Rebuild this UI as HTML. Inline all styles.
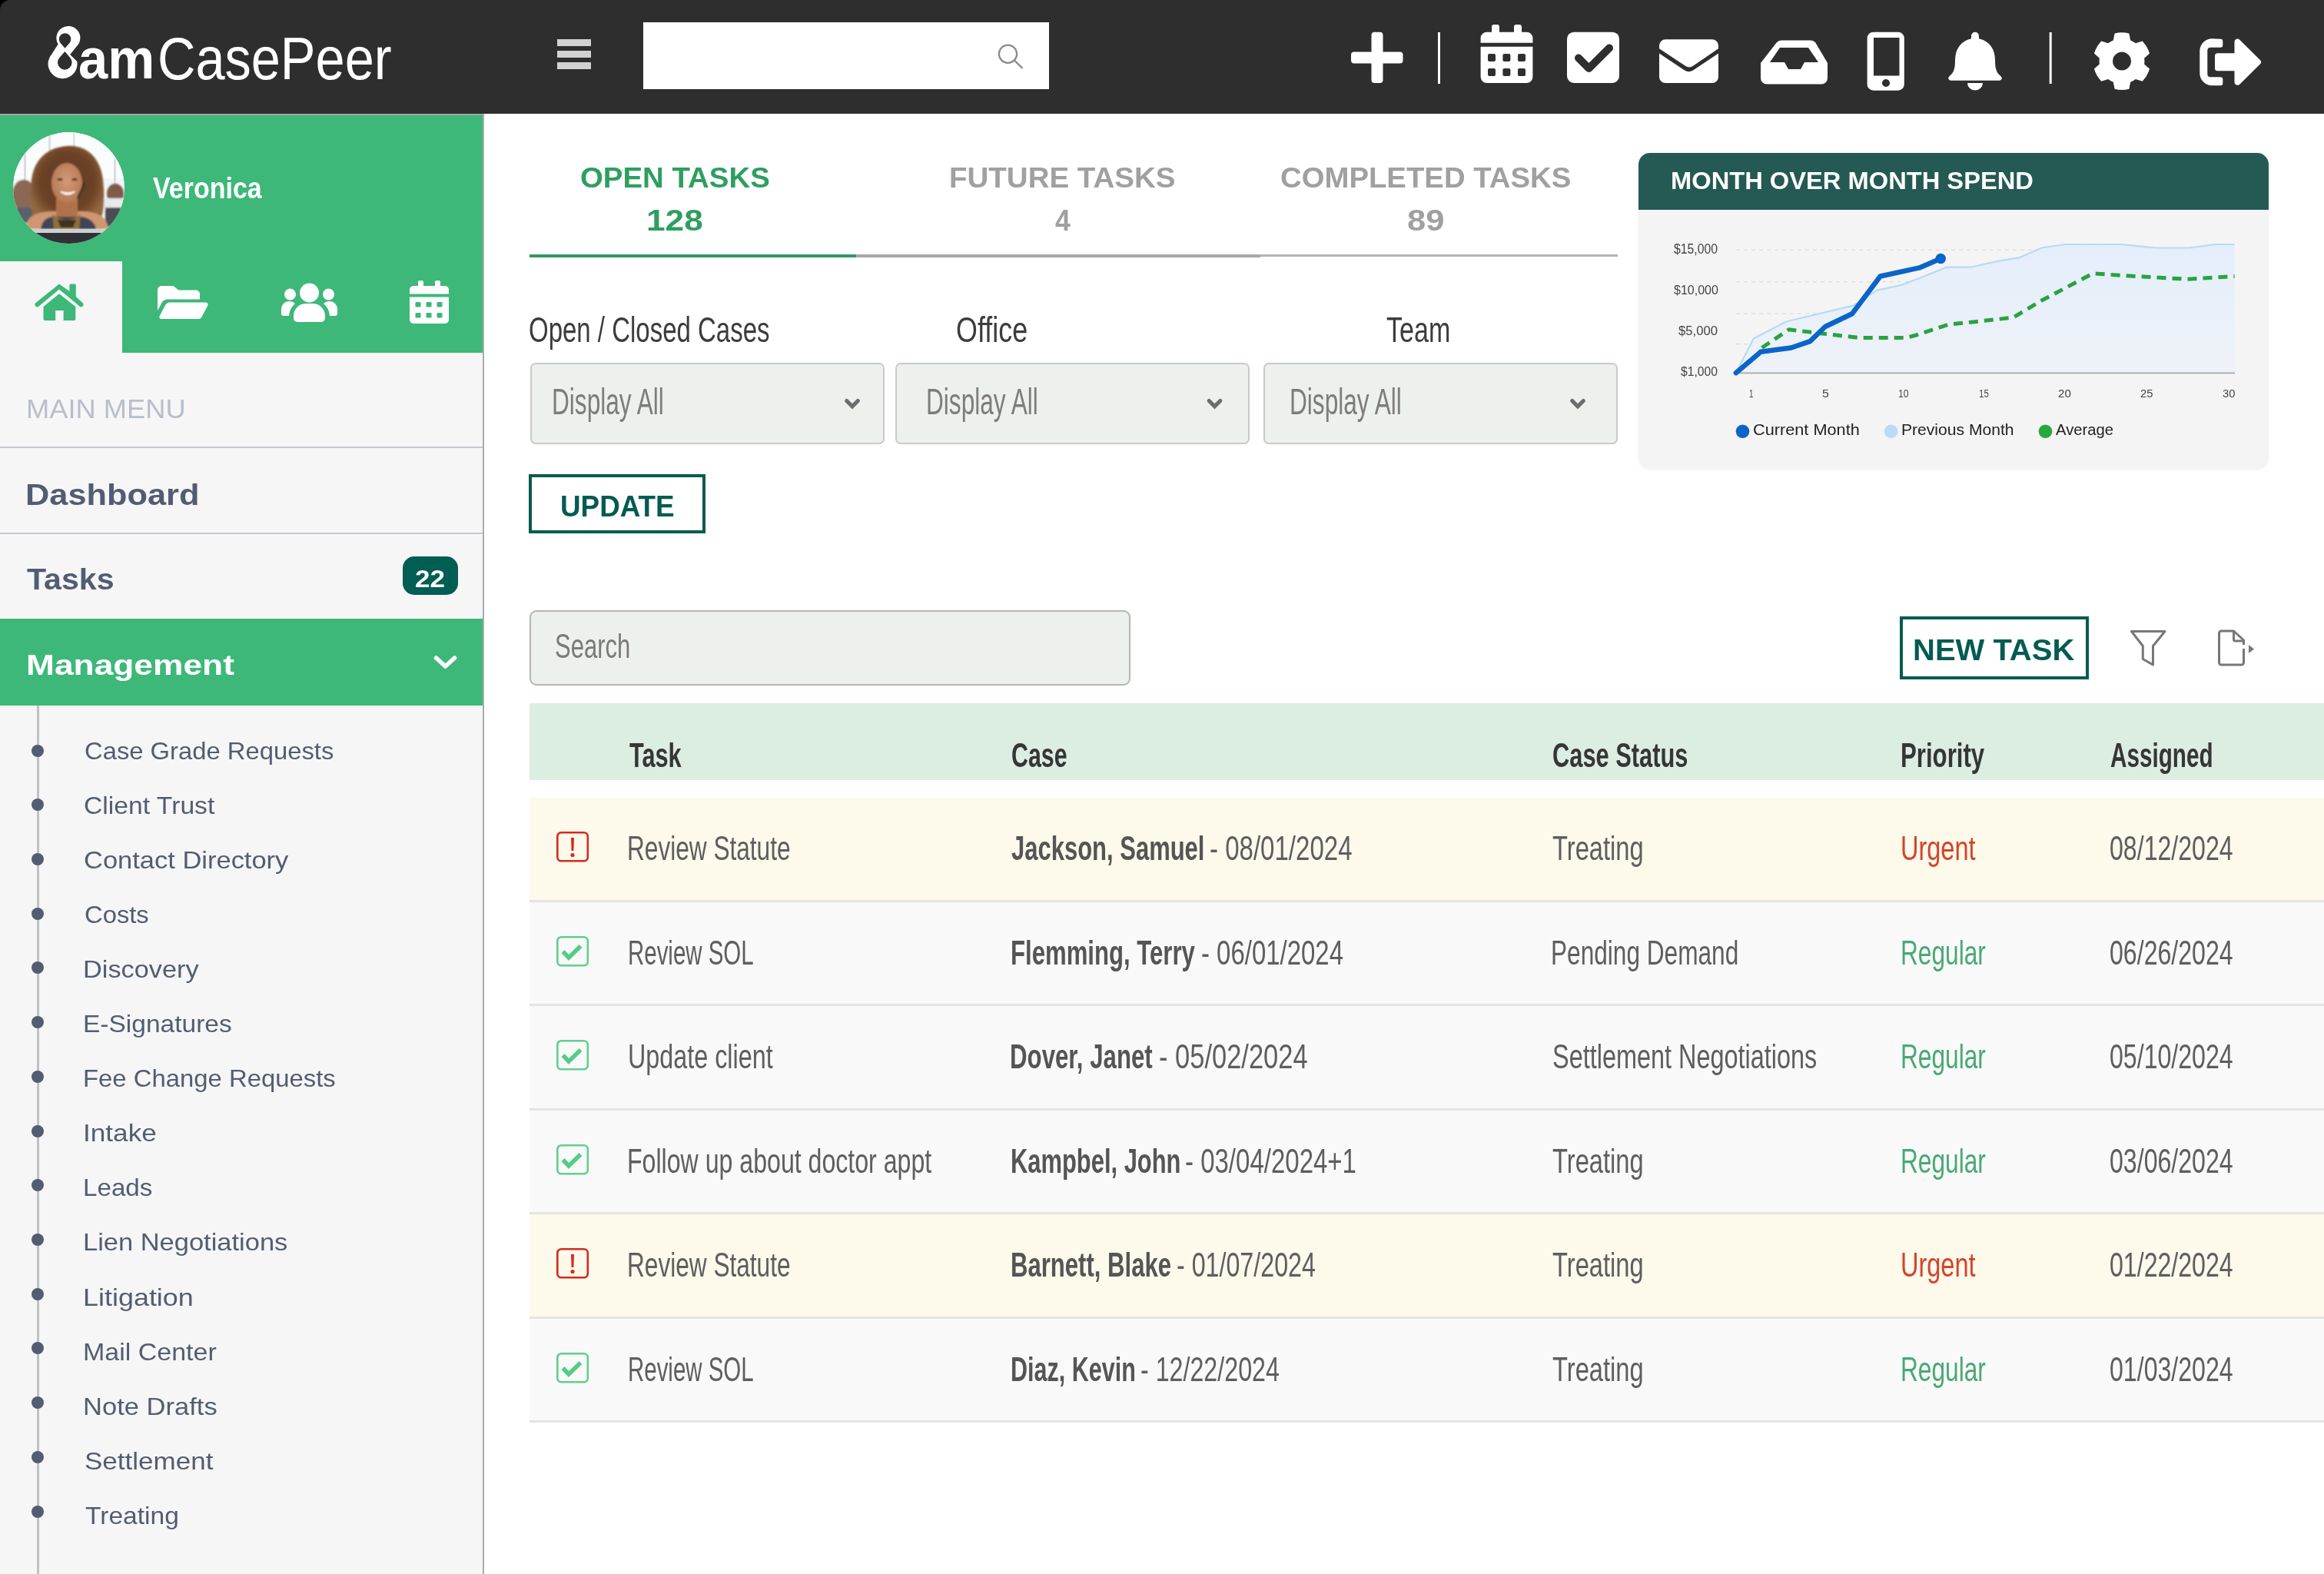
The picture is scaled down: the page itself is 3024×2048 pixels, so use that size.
<!DOCTYPE html><html><head><meta charset="utf-8"><style>
*{margin:0;padding:0;box-sizing:border-box}
html,body{width:3024px;height:2048px;overflow:hidden;background:#fff;font-family:"Liberation Sans",sans-serif}
.a{position:absolute}
.t{position:absolute;white-space:pre;line-height:1;transform-origin:0 0}
</style></head><body>
<div class="a" style="left:0.0px;top:0.0px;width:20.0px;height:20.0px;background:#000"></div>
<div class="a" style="left:0.0px;top:0.0px;width:3024.0px;height:148.0px;background:#2e2e2e;border-top-left-radius:13px"></div>
<div class="a" style="left:725.0px;top:51.0px;width:44.0px;height:9.0px;background:#d2d2d2"></div>
<div class="a" style="left:725.0px;top:66.0px;width:44.0px;height:9.0px;background:#d2d2d2"></div>
<div class="a" style="left:725.0px;top:81.0px;width:44.0px;height:9.0px;background:#d2d2d2"></div>
<div class="a" style="left:836.5px;top:29.0px;width:528.5px;height:86.5px;background:#fff"></div>
<svg class="a" style="left:1290px;top:48px" width="50" height="50" viewBox="1290 48 50 50"><circle cx="1311.5" cy="70.2" r="11.6" fill="none" stroke="#8a8a8a" stroke-width="2.2"/><line x1="1320" y1="78.5" x2="1330.5" y2="89" stroke="#8a8a8a" stroke-width="2.4"/></svg>
<svg class="a" style="left:55px;top:25px" width="60" height="90" viewBox="55 25 60 90"><path fill="#fff" fill-rule="evenodd" d="M75.6 57.4 A15.5 15.5 0 1 1 99.6 60.6 L91.2 70.9 L100.3 80 A19 19 0 1 1 67.3 70.6 Z M84.5 62.8 L78.7 55.9 A7.7 7.7 0 1 1 90.5 55.9 Z M84.4 67.1 L91.4 75.35 A9.3 9.3 0 1 1 77.2 75.35 Z"/></svg>

<svg class="a" style="left:0;top:0" width="3024" height="148" viewBox="0 0 3024 148">
 <g fill="#fff">
  <rect x="1758" y="67.4" width="67.5" height="15" rx="4"/>
  <rect x="1784.5" y="41.7" width="15" height="66.3" rx="4"/>
  <rect x="1871" y="42" width="3" height="67"/>
  <rect x="2666.7" y="42" width="3" height="67"/>
  <!-- calendar -->
  <path d="M1926.6 49.7 a8 8 0 0 1 8 -8 h51.8 a8 8 0 0 1 8 8 v6.1 h-67.8z"/>
  <path d="M1926.6 60.7 h67.8 v39.3 a8 8 0 0 1 -8 8 h-51.8 a8 8 0 0 1 -8 -8z"/>
  <rect x="1941" y="32" width="10" height="14" rx="3"/>
  <rect x="1970" y="32" width="10" height="14" rx="3"/>
  <!-- check square -->
  <rect x="2039" y="41.7" width="68" height="66.3" rx="9"/>
  <!-- envelope -->
  <path d="M2159 59.3 a8 8 0 0 1 8 -8 h61 a8 8 0 0 1 8 8 v4 l-33 22.5 a9 9 0 0 1 -10 0 l-34 -22.5z"/>
  <path d="M2159 69.5 l33 22 a10 10 0 0 0 11 0 l33 -22 v30.5 a8 8 0 0 1 -8 8 h-61 a8 8 0 0 1 -8 -8z"/>
  <!-- inbox -->
  <path d="M2291 82 l21 -27 a8 8 0 0 1 6 -2.5 h38 a8 8 0 0 1 6 2.5 l16 27 v19.5 a8 8 0 0 1 -8 8 h-71 a8 8 0 0 1 -8 -8z M2316 62 l-13 19 h19 l5 9 h16 l5 -9 h18 l-13 -19z" fill-rule="evenodd"/>
  <!-- mobile -->
  <path d="M2437.6 41.7 h32.2 a8 8 0 0 1 8 8 v60 a8 8 0 0 1 -8 8 h-32.2 a8 8 0 0 1 -8 -8 v-60 a8 8 0 0 1 8 -8z M2438 49 v49.6 h33.5 v-49.6z M2454 103 a5 5 0 1 0 0.01 0z" fill-rule="evenodd"/>
  <!-- bell -->
  <path d="M2570 41.7 a5 5 0 0 1 5 5 v3.5 c14 3 21 14 21 28 c0 14 3 17 8 21.5 a3 3 0 0 1 -2 5 h-64 a3 3 0 0 1 -2 -5 c5 -4.5 8 -7.5 8 -21.5 c0 -14 7 -25 21 -28 v-3.5 a5 5 0 0 1 5 -5z"/>
  <path d="M2560 108 h20 a10 9.5 0 0 1 -20 0z"/>
  <!-- gear -->
  <path d="M2749.75 52.44 L2751.64 43.39 A37.4 37.4 0 0 1 2770.36 43.39 L2772.25 52.44 A29.4 29.4 0 0 1 2778.90 56.28 L2787.68 53.39 A37.4 37.4 0 0 1 2797.04 69.61 L2790.15 75.76 A29.4 29.4 0 0 1 2790.15 83.44 L2797.04 89.59 A37.4 37.4 0 0 1 2787.68 105.81 L2778.90 102.92 A29.4 29.4 0 0 1 2772.25 106.76 L2770.36 115.81 A37.4 37.4 0 0 1 2751.64 115.81 L2749.75 106.76 A29.4 29.4 0 0 1 2743.10 102.92 L2734.32 105.81 A37.4 37.4 0 0 1 2724.96 89.59 L2731.85 83.44 A29.4 29.4 0 0 1 2731.85 75.76 L2724.96 69.61 A37.4 37.4 0 0 1 2734.32 53.39 L2743.10 56.28 A29.4 29.4 0 0 1 2749.75 52.44 Z M2761.0 67.6 a12 12 0 1 0 0.01 0z" fill-rule="evenodd"/>
  <!-- sign out -->
  <path d="M2889 50.7 a3 3 0 0 1 3.3 3 v5 a3 3 0 0 1 -3 3 h-13 a4 4 0 0 0 -4 4 v30.5 a4 4 0 0 0 4 4 h13 a3 3 0 0 1 3 3 v5 a3 3 0 0 1 -3 3 h-11 a16 16 0 0 1 -16 -16 v-29 a16 16 0 0 1 16 -16z"/>
  <path d="M2907.5 54 a4 4 0 0 1 6.5 -2.5 l27 26.7 a3.5 3.5 0 0 1 0 5 l-27 26.7 a4 4 0 0 1 -6.5 -2.5 v-15.2 h-22 a3.5 3.5 0 0 1 -3.5 -3.5 v-16 a3.5 3.5 0 0 1 3.5 -3.5 h22z"/>
 </g>
 <g fill="#2e2e2e">
  <rect x="1936" y="70" width="10" height="10" rx="2"/><rect x="1955.4" y="70" width="10" height="10" rx="2"/><rect x="1975" y="70" width="10" height="10" rx="2"/>
  <rect x="1936" y="89" width="10" height="10" rx="2"/><rect x="1955.4" y="89" width="10" height="10" rx="2"/><rect x="1975" y="89" width="10" height="10" rx="2"/>
 </g>
 <path d="M2054 75.5 l13.5 13.5 l26.5 -26.5" fill="none" stroke="#2e2e2e" stroke-width="10" stroke-linecap="round" stroke-linejoin="round"/>
</svg>

<div class="a" style="left:0.0px;top:148.0px;width:630.0px;height:1900.0px;background:#f6f6f6"></div>
<div class="a" style="left:628.0px;top:148.0px;width:2.0px;height:1900.0px;background:#a9abb1"></div>
<div class="a" style="left:0.0px;top:148.0px;width:628.0px;height:2.0px;background:#a3a8a6"></div>
<div class="a" style="left:0.0px;top:150.0px;width:628.0px;height:309.0px;background:#3db879"></div>
<div class="a" style="left:0.0px;top:340.0px;width:159.0px;height:119.0px;background:#f6f6f6"></div>
<svg class="a" style="left:17px;top:172px" width="145" height="145" viewBox="0 0 145 145">
<defs><clipPath id="av"><circle cx="72.5" cy="72.5" r="72.5"/></clipPath>
<radialGradient id="hair" cx="0.5" cy="0.45" r="0.55"><stop offset="0" stop-color="#5a3520"/><stop offset="0.7" stop-color="#6e4428"/><stop offset="1" stop-color="#93673f"/></radialGradient>
<radialGradient id="face" cx="0.5" cy="0.45" r="0.6"><stop offset="0" stop-color="#d39a75"/><stop offset="1" stop-color="#b47652"/></radialGradient>
<filter id="bl"><feGaussianBlur stdDeviation="0.8"/></filter></defs>
<g clip-path="url(#av)">
<rect width="145" height="145" fill="#f3f5f7"/>
<rect x="0" y="0" width="145" height="60" fill="#fbfcfd"/>
<rect x="14" y="10" width="3" height="70" fill="#d9dde2"/><rect x="46" y="0" width="3" height="60" fill="#dde1e5"/><rect x="78" y="0" width="2.5" height="30" fill="#dde1e5"/><rect x="131" y="35" width="3" height="45" fill="#d9dde2"/>
<g filter="url(#bl)">
<ellipse cx="14" cy="82" rx="15" ry="20" fill="#8a6752"/>
<rect x="4" y="98" width="24" height="20" fill="#5c6068"/>
<ellipse cx="133" cy="80" rx="11" ry="13" fill="#7d5c4a"/>
<rect x="113" y="86" width="32" height="14" fill="#e8e9eb"/>
<rect x="120" y="98" width="22" height="25" fill="#4b4e55"/>
<path d="M70 18 C98 16 114 36 117 62 C120 88 118 112 110 120 L30 120 C22 108 22 82 24 62 C27 36 44 20 70 18Z" fill="url(#hair)"/>
<path d="M16 126 C18 108 30 104 50 103 L90 103 C112 104 122 110 124 126Z" fill="#cf9770"/>
<rect x="56" y="86" width="28" height="24" fill="#b0724e"/>
<ellipse cx="70" cy="66" rx="20" ry="26" fill="url(#face)"/>
<path d="M36 126 C38 114 44 111 52 110 L88 110 C98 111 106 116 108 126Z" fill="#3f4552"/>
<path d="M51 106 C60 116 80 116 88 106 L86 126 L53 126Z" fill="#8f7038"/>
<path d="M58 114 L82 114 L78 124 L62 124Z" fill="#3a3020"/>
<path d="M62 77.5 Q71 84 80.5 77.5 Q71 81 62 77.5Z" fill="#fff" stroke="#fff" stroke-width="1.5"/>
<ellipse cx="61" cy="61.5" rx="3.5" ry="1.5" fill="#3a2418"/><ellipse cx="80" cy="61.5" rx="3.5" ry="1.5" fill="#3a2418"/>
<path d="M93 66 L84 86" stroke="#2a2a2a" stroke-width="2.2"/>
</g>
<rect x="0" y="126" width="145" height="5" fill="#cdcfd2"/>
<rect x="0" y="131" width="145" height="14" fill="#2f3136"/>
</g></svg>

<svg class="a" style="left:0;top:340px" width="628" height="119" viewBox="0 340 628 119">
 <g fill="#3db879">
  <path d="M77 369.5 L46.5 394 a3 3 0 0 0 4 4.5 L77 376.5 L103.5 398.5 a3 3 0 0 0 4 -4.5 L98.8 386 V371 a1.5 1.5 0 0 0 -1.5 -1.5 h-5.4 a1.5 1.5 0 0 0 -1.5 1.5 V379 z"/>
  <path d="M77 382.3 L56.5 399 v16 a2 2 0 0 0 2 2 h13.65 v-13 h10.5 v13 h13.65 a2 2 0 0 0 2 -2 v-16z"/>
 </g>
 <g fill="#fff">
  <path d="M205 377 a5 5 0 0 1 5 -5 h15.5 l7 5.5 h22.5 a5 5 0 0 1 5 5 v7 h-42 a9 9 0 0 0 -7.5 4.5 l-5.5 10 z"/>
  <path d="M218 393.5 h49.5 a3 3 0 0 1 2.8 4.2 l-8 15 a4.5 4.5 0 0 1 -4 2.3 h-48.5 a2.5 2.5 0 0 1 -2.2 -3.7 l7.5 -14.3 a6.5 6.5 0 0 1 5.9 -3.5z"/>
  <circle cx="402.5" cy="381" r="12.5"/>
  <circle cx="377.5" cy="383" r="7.5"/><circle cx="427.5" cy="383" r="7.5"/>
    <path d="M387 419 h31 a5 5 0 0 0 5 -5 v-4 a16 16 0 0 0 -15 -15 h-11 a16 16 0 0 0 -15 15 v4 a5 5 0 0 0 5 5z"/>
  <path d="M366 408 a3 3 0 0 0 3 3 h7 a22 22 0 0 1 8 -16 a10 10 0 0 0 -8 -3 a10 10 0 0 0 -10 10z"/>
  <path d="M439 408 a3 3 0 0 1 -3 3 h-7 a22 22 0 0 0 -8 -16 a10 10 0 0 1 8 -3 a10 10 0 0 1 10 10z"/>
  <path d="M533 377 a5 5 0 0 1 5 -5 h41 a5 5 0 0 1 5 5 v5.5 h-51z"/>
  <path d="M533 386.5 h51 v29.5 a5 5 0 0 1 -5 5 h-41 a5 5 0 0 1 -5 -5z"/>
  <rect x="544" y="365" width="7" height="10" rx="2"/><rect x="566" y="365" width="7" height="10" rx="2"/>
 </g>
 <g fill="#3db879">
  <rect x="540.5" y="393" width="7" height="6.5" rx="1"/><rect x="554.5" y="393" width="7" height="6.5" rx="1"/><rect x="568.5" y="393" width="7" height="6.5" rx="1"/>
  <rect x="540.5" y="407" width="7" height="6.5" rx="1"/><rect x="554.5" y="407" width="7" height="6.5" rx="1"/><rect x="568.5" y="407" width="7" height="6.5" rx="1"/>
 </g>
</svg>

<div class="a" style="left:0.0px;top:581.0px;width:628.0px;height:2.0px;background:#c3c8d0"></div>
<div class="a" style="left:0.0px;top:692.5px;width:628.0px;height:2.0px;background:#c3c8d0"></div>
<div class="a" style="left:524.0px;top:724.0px;width:72.0px;height:50.0px;background:#005e52;border-radius:15px"></div>
<div class="a" style="left:0.0px;top:805.0px;width:628.0px;height:113.0px;background:#3db879"></div>
<svg class="a" style="left:560px;top:845px" width="40" height="32" viewBox="560 845 40 32"><path d="M567.5 856 L579.5 867 L591.5 856" fill="none" stroke="#fff" stroke-width="5.5" stroke-linecap="round" stroke-linejoin="round"/></svg>
<div class="a" style="left:47.5px;top:918.0px;width:3.0px;height:1130.0px;background:#c0c1c5"></div>
<div class="a" style="left:41.0px;top:968.5px;width:16.0px;height:16.0px;background:#525d72;border-radius:50%"></div>
<div class="a" style="left:41.0px;top:1039.2px;width:16.0px;height:16.0px;background:#525d72;border-radius:50%"></div>
<div class="a" style="left:41.0px;top:1109.9px;width:16.0px;height:16.0px;background:#525d72;border-radius:50%"></div>
<div class="a" style="left:41.0px;top:1180.7px;width:16.0px;height:16.0px;background:#525d72;border-radius:50%"></div>
<div class="a" style="left:41.0px;top:1251.4px;width:16.0px;height:16.0px;background:#525d72;border-radius:50%"></div>
<div class="a" style="left:41.0px;top:1322.1px;width:16.0px;height:16.0px;background:#525d72;border-radius:50%"></div>
<div class="a" style="left:41.0px;top:1392.8px;width:16.0px;height:16.0px;background:#525d72;border-radius:50%"></div>
<div class="a" style="left:41.0px;top:1463.5px;width:16.0px;height:16.0px;background:#525d72;border-radius:50%"></div>
<div class="a" style="left:41.0px;top:1534.3px;width:16.0px;height:16.0px;background:#525d72;border-radius:50%"></div>
<div class="a" style="left:41.0px;top:1605.0px;width:16.0px;height:16.0px;background:#525d72;border-radius:50%"></div>
<div class="a" style="left:41.0px;top:1675.7px;width:16.0px;height:16.0px;background:#525d72;border-radius:50%"></div>
<div class="a" style="left:41.0px;top:1746.4px;width:16.0px;height:16.0px;background:#525d72;border-radius:50%"></div>
<div class="a" style="left:41.0px;top:1817.1px;width:16.0px;height:16.0px;background:#525d72;border-radius:50%"></div>
<div class="a" style="left:41.0px;top:1887.9px;width:16.0px;height:16.0px;background:#525d72;border-radius:50%"></div>
<div class="a" style="left:41.0px;top:1958.6px;width:16.0px;height:16.0px;background:#525d72;border-radius:50%"></div>
<div class="a" style="left:689.0px;top:330.5px;width:425.0px;height:4.5px;background:#339767"></div>
<div class="a" style="left:1114.0px;top:330.5px;width:526.0px;height:4.0px;background:#a8a8a8"></div>
<div class="a" style="left:1640.0px;top:331.0px;width:465.0px;height:3.0px;background:#b4b4b4"></div>
<div class="a" style="left:690.0px;top:472.0px;width:461.0px;height:106.0px;background:#edf1ee;border:2px solid #c9cac9;border-radius:7px"></div>
<svg class="a" style="left:1089px;top:505px" width="40" height="40" viewBox="1089 505 40 40"><path d="M1101.7 521.5 l7.3 7.3 l7.3 -7.3" fill="none" stroke="#6b6e6f" stroke-width="5.2" stroke-linecap="round" stroke-linejoin="miter"/></svg>
<div class="a" style="left:1165.0px;top:472.0px;width:461.0px;height:106.0px;background:#edf1ee;border:2px solid #c9cac9;border-radius:7px"></div>
<svg class="a" style="left:1560px;top:505px" width="40" height="40" viewBox="1560 505 40 40"><path d="M1573.2 521.5 l7.3 7.3 l7.3 -7.3" fill="none" stroke="#6b6e6f" stroke-width="5.2" stroke-linecap="round" stroke-linejoin="miter"/></svg>
<div class="a" style="left:1644.0px;top:472.0px;width:461.0px;height:106.0px;background:#edf1ee;border:2px solid #c9cac9;border-radius:7px"></div>
<svg class="a" style="left:2033px;top:505px" width="40" height="40" viewBox="2033 505 40 40"><path d="M2045.7 521.5 l7.3 7.3 l7.3 -7.3" fill="none" stroke="#6b6e6f" stroke-width="5.2" stroke-linecap="round" stroke-linejoin="miter"/></svg>
<div class="a" style="left:688.0px;top:617.0px;width:230.0px;height:77.0px;border:4px solid #035b52"></div>
<div class="a" style="left:689.0px;top:794.0px;width:782.0px;height:98.0px;background:#edf1ee;border:2px solid #b4b6b4;border-radius:9px"></div>
<div class="a" style="left:2472.0px;top:802.0px;width:246.0px;height:82.0px;border:4px solid #035b52"></div>
<svg class="a" style="left:2760px;top:810px" width="190" height="70" viewBox="2760 810 190 70">
<path d="M2773.5 821.5 H2817 L2801.5 840.5 V865 L2788.3 857.5 V840.5 Z" fill="none" stroke="#777" stroke-width="3" stroke-linejoin="round"/>
<path d="M2919.5 844 V862 a3 3 0 0 1 -3 3 H2890.5 a3 3 0 0 1 -3 -3 V824 a3 3 0 0 1 3 -3 H2906.5 L2919.5 833 V839" fill="none" stroke="#777" stroke-width="3" stroke-linejoin="round"/>
<path d="M2906.5 821 V832 a2 2 0 0 0 2 2 H2919.5" fill="none" stroke="#777" stroke-width="3" stroke-linejoin="round"/>
<path d="M2926 839 L2933 844.5 L2926 850 Z" fill="#777"/>
</svg>
<div class="a" style="left:689.0px;top:914.5px;width:2335.0px;height:100.0px;background:#dcede1"></div>
<div class="a" style="left:689.0px;top:1038.0px;width:2335.0px;height:132.5px;background:#fdf9eb"></div>
<div class="a" style="left:689.0px;top:1170.5px;width:2335.0px;height:3.0px;background:#e4e4e1"></div>
<svg class="a" style="left:722px;top:1081.0px" width="46" height="42" viewBox="0 0 46 42"><rect x="3.3" y="2.3" width="39.5" height="37" rx="5" fill="none" stroke="#d42b1d" stroke-width="2.6"/><path d="M21 9 h4 l-0.6 17 h-2.8z" fill="#d42b1d"/><circle cx="23" cy="31.5" r="2.6" fill="#d42b1d"/></svg>
<div class="a" style="left:689.0px;top:1173.5px;width:2335.0px;height:132.5px;background:#f9f9f9"></div>
<div class="a" style="left:689.0px;top:1306.0px;width:2335.0px;height:3.0px;background:#e4e4e1"></div>
<svg class="a" style="left:722px;top:1216.5px" width="46" height="42" viewBox="0 0 46 42"><rect x="3.3" y="2.3" width="39.5" height="37" rx="5" fill="none" stroke="#5fd08e" stroke-width="2.6"/><path d="M10.5 21 l7.5 8 l15.5 -15" fill="none" stroke="#55cc85" stroke-width="5.5" stroke-linejoin="miter"/></svg>
<div class="a" style="left:689.0px;top:1309.0px;width:2335.0px;height:132.5px;background:#f9f9f9"></div>
<div class="a" style="left:689.0px;top:1441.5px;width:2335.0px;height:3.0px;background:#e4e4e1"></div>
<svg class="a" style="left:722px;top:1352.0px" width="46" height="42" viewBox="0 0 46 42"><rect x="3.3" y="2.3" width="39.5" height="37" rx="5" fill="none" stroke="#5fd08e" stroke-width="2.6"/><path d="M10.5 21 l7.5 8 l15.5 -15" fill="none" stroke="#55cc85" stroke-width="5.5" stroke-linejoin="miter"/></svg>
<div class="a" style="left:689.0px;top:1444.5px;width:2335.0px;height:132.5px;background:#f9f9f9"></div>
<div class="a" style="left:689.0px;top:1577.0px;width:2335.0px;height:3.0px;background:#e4e4e1"></div>
<svg class="a" style="left:722px;top:1487.5px" width="46" height="42" viewBox="0 0 46 42"><rect x="3.3" y="2.3" width="39.5" height="37" rx="5" fill="none" stroke="#5fd08e" stroke-width="2.6"/><path d="M10.5 21 l7.5 8 l15.5 -15" fill="none" stroke="#55cc85" stroke-width="5.5" stroke-linejoin="miter"/></svg>
<div class="a" style="left:689.0px;top:1580.0px;width:2335.0px;height:132.5px;background:#fdf9eb"></div>
<div class="a" style="left:689.0px;top:1712.5px;width:2335.0px;height:3.0px;background:#e4e4e1"></div>
<svg class="a" style="left:722px;top:1623.0px" width="46" height="42" viewBox="0 0 46 42"><rect x="3.3" y="2.3" width="39.5" height="37" rx="5" fill="none" stroke="#d42b1d" stroke-width="2.6"/><path d="M21 9 h4 l-0.6 17 h-2.8z" fill="#d42b1d"/><circle cx="23" cy="31.5" r="2.6" fill="#d42b1d"/></svg>
<div class="a" style="left:689.0px;top:1715.5px;width:2335.0px;height:132.5px;background:#f9f9f9"></div>
<div class="a" style="left:689.0px;top:1848.0px;width:2335.0px;height:3.0px;background:#e4e4e1"></div>
<svg class="a" style="left:722px;top:1758.5px" width="46" height="42" viewBox="0 0 46 42"><rect x="3.3" y="2.3" width="39.5" height="37" rx="5" fill="none" stroke="#5fd08e" stroke-width="2.6"/><path d="M10.5 21 l7.5 8 l15.5 -15" fill="none" stroke="#55cc85" stroke-width="5.5" stroke-linejoin="miter"/></svg>
<div class="a" style="left:2132.0px;top:198.5px;width:820.0px;height:412.9px;background:#f4f4f4;border-radius:15px;box-shadow:0 0 6px rgba(0,0,0,0.04)"></div>
<div class="a" style="left:2132.0px;top:198.5px;width:820.0px;height:74.0px;background:#245a53;border-radius:15px 15px 0 0"></div>
<svg class="a" style="left:2132px;top:272px" width="820" height="340" viewBox="2132 272 820 340">
<defs><linearGradient id="pg" x1="0" y1="0" x2="0" y2="1"><stop offset="0" stop-color="#e4eefb"/><stop offset="1" stop-color="#eef2f7"/></linearGradient></defs>
<g stroke="#dcdcdc" stroke-width="1.3" stroke-dasharray="5 5">
<line x1="2259" y1="325.2" x2="2908" y2="325.2"/><line x1="2259" y1="366.6" x2="2908" y2="366.6"/><line x1="2259" y1="408.2" x2="2908" y2="408.2"/><line x1="2259" y1="447.6" x2="2908" y2="447.6"/>
</g>
<path d="M2258.8 485.2 L2282.0 440.3 L2324.7 418.2 L2411.6 397.6 L2442.0 377.8 L2474.0 370.9 L2500.0 361.0 L2532.7 347.7 L2564.1 347.7 L2597.4 340.2 L2627.0 335.4 L2656.6 322.5 L2686.2 318.0 L2760.3 318.0 L2804.7 322.5 L2849.0 322.5 L2882.4 318.0 L2907.6 318.0 L2907.6 485.2 L2258.8 485.2 Z" fill="url(#pg)"/>
<polyline points="2258.8,485.2 2282.0,440.3 2324.7,418.2 2411.6,397.6 2442.0,377.8 2474.0,370.9 2500.0,361.0 2532.7,347.7 2564.1,347.7 2597.4,340.2 2627.0,335.4 2656.6,322.5 2686.2,318.0 2760.3,318.0 2804.7,322.5 2849.0,322.5 2882.4,318.0 2907.6,318.0" fill="none" stroke="#b9d8f7" stroke-width="2.2" stroke-linejoin="round"/>
<line x1="2259" y1="485.4" x2="2908" y2="485.4" stroke="#a8a8a8" stroke-width="1.6"/>
<polyline points="2292.6,452.5 2327.7,428.8 2373.4,434.2 2419.2,439.5 2480.2,439.5 2491.6,436.5 2534.5,422.4 2619.6,413.2 2656.6,391.0 2723.3,355.8 2767.7,358.8 2845.4,363.2 2907.6,359.5" fill="none" stroke="#2aa240" stroke-width="5" stroke-dasharray="12 8" stroke-linejoin="round"/>
<polyline points="2258.8,485.2 2291.1,457.8 2330.8,452.5 2355.2,444.1 2375.0,425.0 2410.0,408.2 2446.6,359.5 2497.5,348.4 2525.2,336.5" fill="none" stroke="#0a64c9" stroke-width="6.5" stroke-linejoin="round" stroke-linecap="round"/>
<circle cx="2525.2" cy="336.5" r="6.8" fill="#0a64c9"/>
<circle cx="2267.5" cy="561.3" r="8.8" fill="#0a64c9"/>
<circle cx="2460.6" cy="561.3" r="8.8" fill="#b9dafa"/>
<circle cx="2661.5" cy="561.3" r="8.8" fill="#29a640"/>
</svg>
<div class="t" style="left:199.0px;top:226.2px;font-size:38.12px;font-weight:bold;color:#fff;transform:scaleX(0.8923)">Veronica</div>
<div class="t" style="left:33.8px;top:513.9px;font-size:35.36px;font-weight:normal;color:#b8bfcb;transform:scaleX(1.0261)">MAIN MENU</div>
<div class="t" style="left:33.3px;top:623.7px;font-size:39.13px;font-weight:bold;color:#525d72;transform:scaleX(1.1081)">Dashboard</div>
<div class="t" style="left:35.0px;top:733.7px;font-size:39.13px;font-weight:bold;color:#525d72;transform:scaleX(1.0520)">Tasks</div>
<div class="t" style="left:539.9px;top:738.1px;font-size:30.43px;font-weight:bold;color:#fff;transform:scaleX(1.1511)">22</div>
<div class="t" style="left:33.5px;top:847.0px;font-size:37.25px;font-weight:bold;color:#fff;transform:scaleX(1.1899)">Management</div>
<div class="t" style="left:109.5px;top:962.0px;font-size:31.30px;font-weight:normal;color:#525d72;transform:scaleX(1.0473)">Case Grade Requests</div>
<div class="t" style="left:109.4px;top:1033.0px;font-size:31.30px;font-weight:normal;color:#525d72;transform:scaleX(1.0761)">Client Trust</div>
<div class="t" style="left:109.4px;top:1104.1px;font-size:31.30px;font-weight:normal;color:#525d72;transform:scaleX(1.1017)">Contact Directory</div>
<div class="t" style="left:109.5px;top:1175.1px;font-size:31.30px;font-weight:normal;color:#525d72;transform:scaleX(1.0468)">Costs</div>
<div class="t" style="left:108.3px;top:1246.2px;font-size:31.30px;font-weight:normal;color:#525d72;transform:scaleX(1.0958)">Discovery</div>
<div class="t" style="left:108.4px;top:1317.2px;font-size:31.30px;font-weight:normal;color:#525d72;transform:scaleX(1.0708)">E-Signatures</div>
<div class="t" style="left:108.4px;top:1388.3px;font-size:31.30px;font-weight:normal;color:#525d72;transform:scaleX(1.0496)">Fee Change Requests</div>
<div class="t" style="left:108.3px;top:1459.3px;font-size:31.30px;font-weight:normal;color:#525d72;transform:scaleX(1.1243)">Intake</div>
<div class="t" style="left:108.4px;top:1530.4px;font-size:31.30px;font-weight:normal;color:#525d72;transform:scaleX(1.0602)">Leads</div>
<div class="t" style="left:108.3px;top:1601.4px;font-size:31.30px;font-weight:normal;color:#525d72;transform:scaleX(1.1011)">Lien Negotiations</div>
<div class="t" style="left:108.2px;top:1672.5px;font-size:31.30px;font-weight:normal;color:#525d72;transform:scaleX(1.1478)">Litigation</div>
<div class="t" style="left:108.3px;top:1743.5px;font-size:31.30px;font-weight:normal;color:#525d72;transform:scaleX(1.0860)">Mail Center</div>
<div class="t" style="left:108.3px;top:1814.6px;font-size:31.30px;font-weight:normal;color:#525d72;transform:scaleX(1.1040)">Note Drafts</div>
<div class="t" style="left:109.9px;top:1885.6px;font-size:31.30px;font-weight:normal;color:#525d72;transform:scaleX(1.1192)">Settlement</div>
<div class="t" style="left:110.5px;top:1956.7px;font-size:31.30px;font-weight:normal;color:#525d72;transform:scaleX(1.0724)">Treating</div>
<div class="t" style="left:754.8px;top:212.5px;font-size:37.83px;font-weight:bold;color:#2f9e60;transform:scaleX(1.0149)">OPEN TASKS</div>
<div class="t" style="left:841.2px;top:268.4px;font-size:38.84px;font-weight:bold;color:#2f9e60;transform:scaleX(1.1399)">128</div>
<div class="t" style="left:1235.1px;top:212.5px;font-size:37.83px;font-weight:bold;color:#a0a0a0;transform:scaleX(1.0177)">FUTURE TASKS</div>
<div class="t" style="left:1373.0px;top:268.4px;font-size:38.84px;font-weight:bold;color:#a0a0a0;transform:scaleX(0.9154)">4</div>
<div class="t" style="left:1665.8px;top:212.5px;font-size:37.83px;font-weight:bold;color:#a0a0a0;transform:scaleX(1.0130)">COMPLETED TASKS</div>
<div class="t" style="left:1830.6px;top:268.4px;font-size:38.84px;font-weight:bold;color:#a0a0a0;transform:scaleX(1.1214)">89</div>
<div class="t" style="left:687.5px;top:406.1px;font-size:46.23px;font-weight:normal;color:#3c3c3c;transform:scaleX(0.7136)">Open / Closed Cases</div>
<div class="t" style="left:1244.3px;top:406.1px;font-size:46.23px;font-weight:normal;color:#3c3c3c;transform:scaleX(0.7767)">Office</div>
<div class="t" style="left:1803.5px;top:406.1px;font-size:46.23px;font-weight:normal;color:#3c3c3c;transform:scaleX(0.7368)">Team</div>
<div class="t" style="left:717.5px;top:499.3px;font-size:47.83px;font-weight:normal;color:#7d7d7d;transform:scaleX(0.6609)">Display All</div>
<div class="t" style="left:1204.5px;top:499.3px;font-size:47.83px;font-weight:normal;color:#7d7d7d;transform:scaleX(0.6609)">Display All</div>
<div class="t" style="left:1677.5px;top:499.3px;font-size:47.83px;font-weight:normal;color:#7d7d7d;transform:scaleX(0.6609)">Display All</div>
<div class="t" style="left:729.3px;top:639.8px;font-size:38.70px;font-weight:bold;color:#035b52;transform:scaleX(0.9519)">UPDATE</div>
<div class="t" style="left:722.1px;top:818.0px;font-size:44.78px;font-weight:normal;color:#7a7a7a;transform:scaleX(0.6936)">Search</div>
<div class="t" style="left:2489.3px;top:826.2px;font-size:39.71px;font-weight:bold;color:#035b52;transform:scaleX(1.0072)">NEW TASK</div>
<div class="t" style="left:818.5px;top:961.4px;font-size:44.20px;font-weight:bold;color:#363636;transform:scaleX(0.6946)">Task</div>
<div class="t" style="left:1315.5px;top:961.4px;font-size:44.20px;font-weight:bold;color:#363636;transform:scaleX(0.6871)">Case</div>
<div class="t" style="left:2019.7px;top:961.4px;font-size:44.20px;font-weight:bold;color:#363636;transform:scaleX(0.6976)">Case Status</div>
<div class="t" style="left:2473.4px;top:961.4px;font-size:44.20px;font-weight:bold;color:#363636;transform:scaleX(0.7060)">Priority</div>
<div class="t" style="left:2745.5px;top:961.4px;font-size:44.20px;font-weight:bold;color:#363636;transform:scaleX(0.6718)">Assigned</div>
<div class="t" style="left:816.3px;top:1081.2px;font-size:45.22px;font-weight:normal;color:#5e5e5e;transform:scaleX(0.6989)">Review Statute</div>
<div class="t" style="left:1574.0px;top:1081.2px;font-size:45.22px;color:#5e5e5e;transform:scaleX(0.7307)">- 08/01/2024</div>
<div class="t" style="left:1316.4px;top:1081.2px;font-size:45.22px;font-weight:bold;color:#555;transform:scaleX(0.6852)">Jackson, Samuel</div>
<div class="t" style="left:2020.2px;top:1081.2px;font-size:45.22px;font-weight:normal;color:#5e5e5e;transform:scaleX(0.7226)">Treating</div>
<div class="t" style="left:2473.2px;top:1081.2px;font-size:45.22px;font-weight:normal;color:#d2452b;transform:scaleX(0.7185)">Urgent</div>
<div class="t" style="left:2745.3px;top:1081.2px;font-size:45.22px;font-weight:normal;color:#5e5e5e;transform:scaleX(0.7100)">08/12/2024</div>
<div class="t" style="left:816.5px;top:1216.7px;font-size:45.22px;font-weight:normal;color:#5e5e5e;transform:scaleX(0.6511)">Review SOL</div>
<div class="t" style="left:1562.5px;top:1216.7px;font-size:45.22px;color:#5e5e5e;transform:scaleX(0.7284)">- 06/01/2024</div>
<div class="t" style="left:1314.5px;top:1216.7px;font-size:45.22px;font-weight:bold;color:#555;transform:scaleX(0.6884)">Flemming, Terry</div>
<div class="t" style="left:2018.2px;top:1216.7px;font-size:45.22px;font-weight:normal;color:#5e5e5e;transform:scaleX(0.6990)">Pending Demand</div>
<div class="t" style="left:2472.7px;top:1216.7px;font-size:45.22px;font-weight:normal;color:#4aa876;transform:scaleX(0.6999)">Regular</div>
<div class="t" style="left:2745.3px;top:1216.7px;font-size:45.22px;font-weight:normal;color:#5e5e5e;transform:scaleX(0.7100)">06/26/2024</div>
<div class="t" style="left:816.8px;top:1352.2px;font-size:45.22px;font-weight:normal;color:#5e5e5e;transform:scaleX(0.7146)">Update client</div>
<div class="t" style="left:1507.9px;top:1352.2px;font-size:45.22px;color:#5e5e5e;transform:scaleX(0.7622)">- 05/02/2024</div>
<div class="t" style="left:1314.4px;top:1352.2px;font-size:45.22px;font-weight:bold;color:#555;transform:scaleX(0.6906)">Dover, Janet</div>
<div class="t" style="left:2019.7px;top:1352.2px;font-size:45.22px;font-weight:normal;color:#5e5e5e;transform:scaleX(0.7172)">Settlement Negotiations</div>
<div class="t" style="left:2472.7px;top:1352.2px;font-size:45.22px;font-weight:normal;color:#4aa876;transform:scaleX(0.6999)">Regular</div>
<div class="t" style="left:2745.3px;top:1352.2px;font-size:45.22px;font-weight:normal;color:#5e5e5e;transform:scaleX(0.7100)">05/10/2024</div>
<div class="t" style="left:816.3px;top:1487.7px;font-size:45.22px;font-weight:normal;color:#5e5e5e;transform:scaleX(0.7100)">Follow up about doctor appt</div>
<div class="t" style="left:1542.4px;top:1487.7px;font-size:45.22px;color:#5e5e5e;transform:scaleX(0.7299)">- 03/04/2024+1</div>
<div class="t" style="left:1314.5px;top:1487.7px;font-size:45.22px;font-weight:bold;color:#555;transform:scaleX(0.6832)">Kampbel, John</div>
<div class="t" style="left:2020.2px;top:1487.7px;font-size:45.22px;font-weight:normal;color:#5e5e5e;transform:scaleX(0.7226)">Treating</div>
<div class="t" style="left:2472.7px;top:1487.7px;font-size:45.22px;font-weight:normal;color:#4aa876;transform:scaleX(0.6999)">Regular</div>
<div class="t" style="left:2745.3px;top:1487.7px;font-size:45.22px;font-weight:normal;color:#5e5e5e;transform:scaleX(0.7100)">03/06/2024</div>
<div class="t" style="left:816.3px;top:1623.2px;font-size:45.22px;font-weight:normal;color:#5e5e5e;transform:scaleX(0.6989)">Review Statute</div>
<div class="t" style="left:1530.7px;top:1623.2px;font-size:45.22px;color:#5e5e5e;transform:scaleX(0.7124)">- 01/07/2024</div>
<div class="t" style="left:1314.5px;top:1623.2px;font-size:45.22px;font-weight:bold;color:#555;transform:scaleX(0.6874)">Barnett, Blake</div>
<div class="t" style="left:2020.2px;top:1623.2px;font-size:45.22px;font-weight:normal;color:#5e5e5e;transform:scaleX(0.7226)">Treating</div>
<div class="t" style="left:2473.2px;top:1623.2px;font-size:45.22px;font-weight:normal;color:#d2452b;transform:scaleX(0.7185)">Urgent</div>
<div class="t" style="left:2745.3px;top:1623.2px;font-size:45.22px;font-weight:normal;color:#5e5e5e;transform:scaleX(0.7100)">01/22/2024</div>
<div class="t" style="left:816.5px;top:1758.7px;font-size:45.22px;font-weight:normal;color:#5e5e5e;transform:scaleX(0.6511)">Review SOL</div>
<div class="t" style="left:1483.9px;top:1758.7px;font-size:45.22px;color:#5e5e5e;transform:scaleX(0.7124)">- 12/22/2024</div>
<div class="t" style="left:1314.5px;top:1758.7px;font-size:45.22px;font-weight:bold;color:#555;transform:scaleX(0.6752)">Diaz, Kevin</div>
<div class="t" style="left:2020.2px;top:1758.7px;font-size:45.22px;font-weight:normal;color:#5e5e5e;transform:scaleX(0.7226)">Treating</div>
<div class="t" style="left:2472.7px;top:1758.7px;font-size:45.22px;font-weight:normal;color:#4aa876;transform:scaleX(0.6999)">Regular</div>
<div class="t" style="left:2745.3px;top:1758.7px;font-size:45.22px;font-weight:normal;color:#5e5e5e;transform:scaleX(0.7100)">01/03/2024</div>
<div class="t" style="left:2174.0px;top:219.3px;font-size:32.17px;font-weight:bold;color:#fff;transform:scaleX(1.0160)">MONTH OVER MONTH SPEND</div>
<div class="t" style="left:101.6px;top:38.5px;font-size:75.00px;font-weight:bold;color:#fff;transform:scaleX(0.9148)">am</div>
<div class="t" style="left:204.8px;top:37.5px;font-size:77.00px;font-weight:normal;color:#fff;transform:scaleX(0.8894)">CasePeer</div>
<div class="t" style="left:2178.3px;top:316.1px;font-size:17.83px;font-weight:normal;color:#454545;transform:scaleX(0.8860)">$15,000</div>
<div class="t" style="left:2177.5px;top:369.2px;font-size:17.25px;font-weight:normal;color:#454545;transform:scaleX(0.9287)">$10,000</div>
<div class="t" style="left:2184.4px;top:422.6px;font-size:16.96px;font-weight:normal;color:#454545;transform:scaleX(0.9837)">$5,000</div>
<div class="t" style="left:2187.4px;top:475.8px;font-size:16.52px;font-weight:normal;color:#454545;transform:scaleX(0.9497)">$1,000</div>
<div class="t" style="left:2275.7px;top:505.2px;font-size:14.30px;font-weight:normal;color:#454545;transform:scaleX(0.6790)">1</div>
<div class="t" style="left:2371.3px;top:505.2px;font-size:14.30px;font-weight:normal;color:#454545;transform:scaleX(1.1117)">5</div>
<div class="t" style="left:2469.7px;top:505.2px;font-size:14.30px;font-weight:normal;color:#454545;transform:scaleX(0.8529)">10</div>
<div class="t" style="left:2574.5px;top:505.2px;font-size:14.30px;font-weight:normal;color:#454545;transform:scaleX(0.8037)">15</div>
<div class="t" style="left:2678.3px;top:505.2px;font-size:14.30px;font-weight:normal;color:#454545;transform:scaleX(1.0619)">20</div>
<div class="t" style="left:2785.3px;top:505.2px;font-size:14.30px;font-weight:normal;color:#454545;transform:scaleX(1.0371)">25</div>
<div class="t" style="left:2891.5px;top:505.2px;font-size:14.30px;font-weight:normal;color:#454545;transform:scaleX(1.0329)">30</div>
<div class="t" style="left:2280.8px;top:550.4px;font-size:19.71px;font-weight:normal;color:#222;transform:scaleX(1.1029)">Current Month</div>
<div class="t" style="left:2473.8px;top:550.4px;font-size:19.71px;font-weight:normal;color:#222;transform:scaleX(1.0715)">Previous Month</div>
<div class="t" style="left:2675.3px;top:550.4px;font-size:19.71px;font-weight:normal;color:#222;transform:scaleX(1.0296)">Average</div>
</body></html>
